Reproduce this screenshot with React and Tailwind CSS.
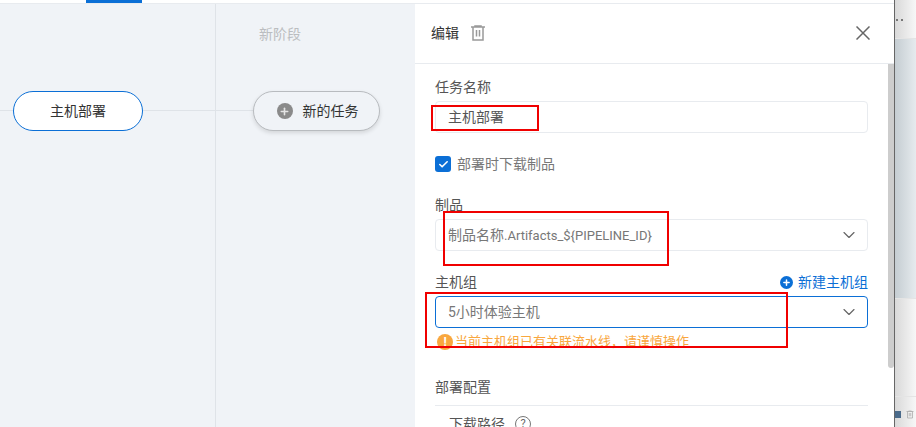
import React from "react";
import { ChevronDown, Check, Plus } from "lucide-react";

const fontStack = "font-['Roboto','Noto_Sans_CJK_SC',sans-serif]";

const TrashIcon = ({ className }) => (
  <svg viewBox="0 0 16 16" fill="none" stroke="currentColor" strokeWidth="1.5" className={className}>
    <path d="M1 2h14M5 2V1h6v1M3 2v13h10V2M6.5 5v6.5M9.5 5v6.5" />
  </svg>
);

const CloseIcon = ({ className }) => (
  <svg viewBox="0 0 14 14" fill="none" stroke="currentColor" strokeWidth="1.5" className={className}>
    <path d="M0.5 0.5l13 13M13.5 0.5l-13 13" />
  </svg>
);

const Pill = ({ active, children }) => (
  <div
    className={`h-10 shrink-0 rounded-[20px] flex items-center justify-center gap-[10px] text-sm text-[#333] ${
      active
        ? "w-[130px] bg-white border border-[#0b6fd6]"
        : "w-[127px] pl-[2px] bg-[#f0f3f7] border border-[#b8bbbf] shadow-[0_2px_4px_rgba(0,0,0,0.12)]"
    }`}
  >
    {children}
  </div>
);

const Field = ({ label, extra, children, className }) => (
  <div className={className}>
    <div className="h-5 flex items-center justify-between text-sm text-[#555]">
      <span>{label}</span>
      {extra}
    </div>
    {children}
  </div>
);

const Select = ({ children, focused, className }) => (
  <div
    className={`h-8 rounded-[4px] border flex items-center justify-between pl-3 pr-2 text-sm text-[#777] ${
      focused ? "border-[#0b6fd6]" : "border-[#e8ebef]"
    } ${className}`}
  >
    <span>{children}</span>
    <ChevronDown size={20} strokeWidth={1.4} className="text-[#666] -mt-px" />
  </div>
);

const RedBox = ({ className }) => (
  <div className={`absolute border-2 border-[#f00000] pointer-events-none ${className}`} />
);

export default function App() {
  return (
    <div className={`relative w-[916px] h-[427px] overflow-hidden bg-white flex flex-col ${fontStack}`}>
      {/* Top tab strip */}
      <div className="h-1 shrink-0 border-b border-[#e8ebef] pl-[86px]">
        <div className="w-14 h-[3px] bg-[#0b6fd6]" />
      </div>

      <div className="flex-1 min-h-0 flex">
        {/* Pipeline canvas */}
        <div className="w-[415px] shrink-0 bg-[#f0f3f7] flex">
          <div className="w-[216px] shrink-0 border-r border-[#dfe3e8] pt-[87px]">
            <div className="flex items-center">
              <div className="w-[13px] h-px bg-[#dfe3e8] mb-[2px]" />
              <Pill active>主机部署</Pill>
              <div className="flex-1 h-px bg-[#dfe3e8] mb-[2px]" />
            </div>
          </div>
          <div className="flex-1">
            <div className="pl-[43px] pt-[20px] h-[87px] text-sm text-[#bbbdc0]">新阶段</div>
            <div className="flex items-center">
              <div className="w-[37px] h-px bg-[#dfe3e8] mb-[2px]" />
              <Pill>
                <span className="w-4 h-4 rounded-full bg-[#8a8a8a] flex items-center justify-center">
                  <Plus size={11} strokeWidth={3.5} className="text-[#e4e4e4]" />
                </span>
                新的任务
              </Pill>
            </div>
          </div>
        </div>

        {/* Edit panel */}
        <div className="w-[479px] shrink-0 flex flex-col">
          <div className="h-[60px] shrink-0 border-b border-[#e8ebef] flex items-center pl-4 pr-6 pb-px">
            <span className="text-sm text-[#333]">编辑</span>
            <TrashIcon className="w-4 h-4 ml-[11px] text-[#999]" />
            <CloseIcon className="w-[14px] h-[14px] ml-auto text-[#666]" />
          </div>
          <div className="flex-1 min-h-0 overflow-hidden flex">
            <div className="w-[473px] shrink-0 pl-5 pr-5 pt-[13px]">
              <Field label="任务名称">
                <div className="mt-1 h-8 rounded-[4px] border border-[#e8ebef] flex items-center pl-3 text-sm text-[#555]">
                  主机部署
                </div>
              </Field>
              <div className="mt-[23px] h-4 flex items-center gap-[6px] text-sm text-[#777]">
                <span className="w-4 h-4 rounded-[3px] bg-[#0b6fd6] flex items-center justify-center">
                  <Check size={11} strokeWidth={3.5} className="text-white" />
                </span>
                部署时下载制品
              </div>
              <Field label="制品" className="mt-[23px]">
                <Select className="mt-1">
                  制品名称<span className="text-[13px]">.Artifacts_${"{PIPELINE_ID}"}</span>
                </Select>
              </Field>
              <Field
                label="主机组"
                className="mt-[21px]"
                extra={
                  <span className="flex items-center gap-[5px] text-sm text-[#0b6fd6]">
                    <span className="w-[13px] h-[13px] rounded-full bg-[#0b6fd6] flex items-center justify-center">
                      <Plus size={9} strokeWidth={4} className="text-white" />
                    </span>
                    新建主机组
                  </span>
                }
              >
                <Select focused className="mt-[4px]">
                  5小时体验主机
                </Select>
              </Field>
              <div className="mt-[6px] h-4 flex items-center gap-[2px] pl-[2px] text-[13px] text-[#f9a73e]">
                <span className="w-4 h-4 rounded-full bg-[#f9a73e] text-white text-[12px] font-bold flex items-center justify-center">
                  !
                </span>
                当前主机组已有关联流水线，请谨慎操作
              </div>
              <div className="mt-[27px] h-5 flex items-center text-sm text-[#555]">部署配置</div>
              <div className="mt-2 border-t border-[#e8ebef] pt-[8px] pl-[14px] flex items-center gap-[10px] text-sm text-[#555]">
                下载路径
                <span className="w-4 h-4 rounded-full border border-[#777] text-[11px] flex items-center justify-center text-[#666]">
                  ?
                </span>
              </div>
            </div>
            {/* Scrollbar */}
            <div className="w-[6px] shrink-0">
              <div className="h-[304px] bg-[#cdcdcd] rounded-b-[3px]" />
            </div>
          </div>
        </div>

        {/* Page behind the drawer */}
        <div className="flex-1 border-l border-[#666] bg-gradient-to-r from-[#d9d9d9] to-[#f7f7f7] flex flex-col -mt-1">
          <div className="h-[39px] border-b border-[#e4e4e4] flex items-center pl-[1px] pt-[2px] gap-[3px]">
            <span className="w-[2px] h-[2px] bg-[#777]" />
            <span className="w-[2px] h-[2px] bg-[#777]" />
          </div>
          <div className="h-[260px] border-b border-[#e4e4e4] bg-gradient-to-r from-[#c5cdd2] to-[#e6ebee]" />
          <div className="h-[98px] border-b border-[#e4e4e4]" />
          <div className="flex-1 flex items-start pt-[13px] gap-[5px]">
            <span className="w-[6px] h-[7px] mt-px bg-[#4a6a8a]" />
            <TrashIcon className="w-[8px] h-[9px] text-[#aaa]" />
          </div>
        </div>
      </div>

      {/* Red annotations drawn over the screenshot */}
      <RedBox className="left-[431px] top-[105px] w-[108px] h-[26px]" />
      <RedBox className="left-[443px] top-[211px] w-[226px] h-[55px]" />
      <RedBox className="left-[425px] top-[292px] w-[363px] h-[56px]" />
    </div>
  );
}
